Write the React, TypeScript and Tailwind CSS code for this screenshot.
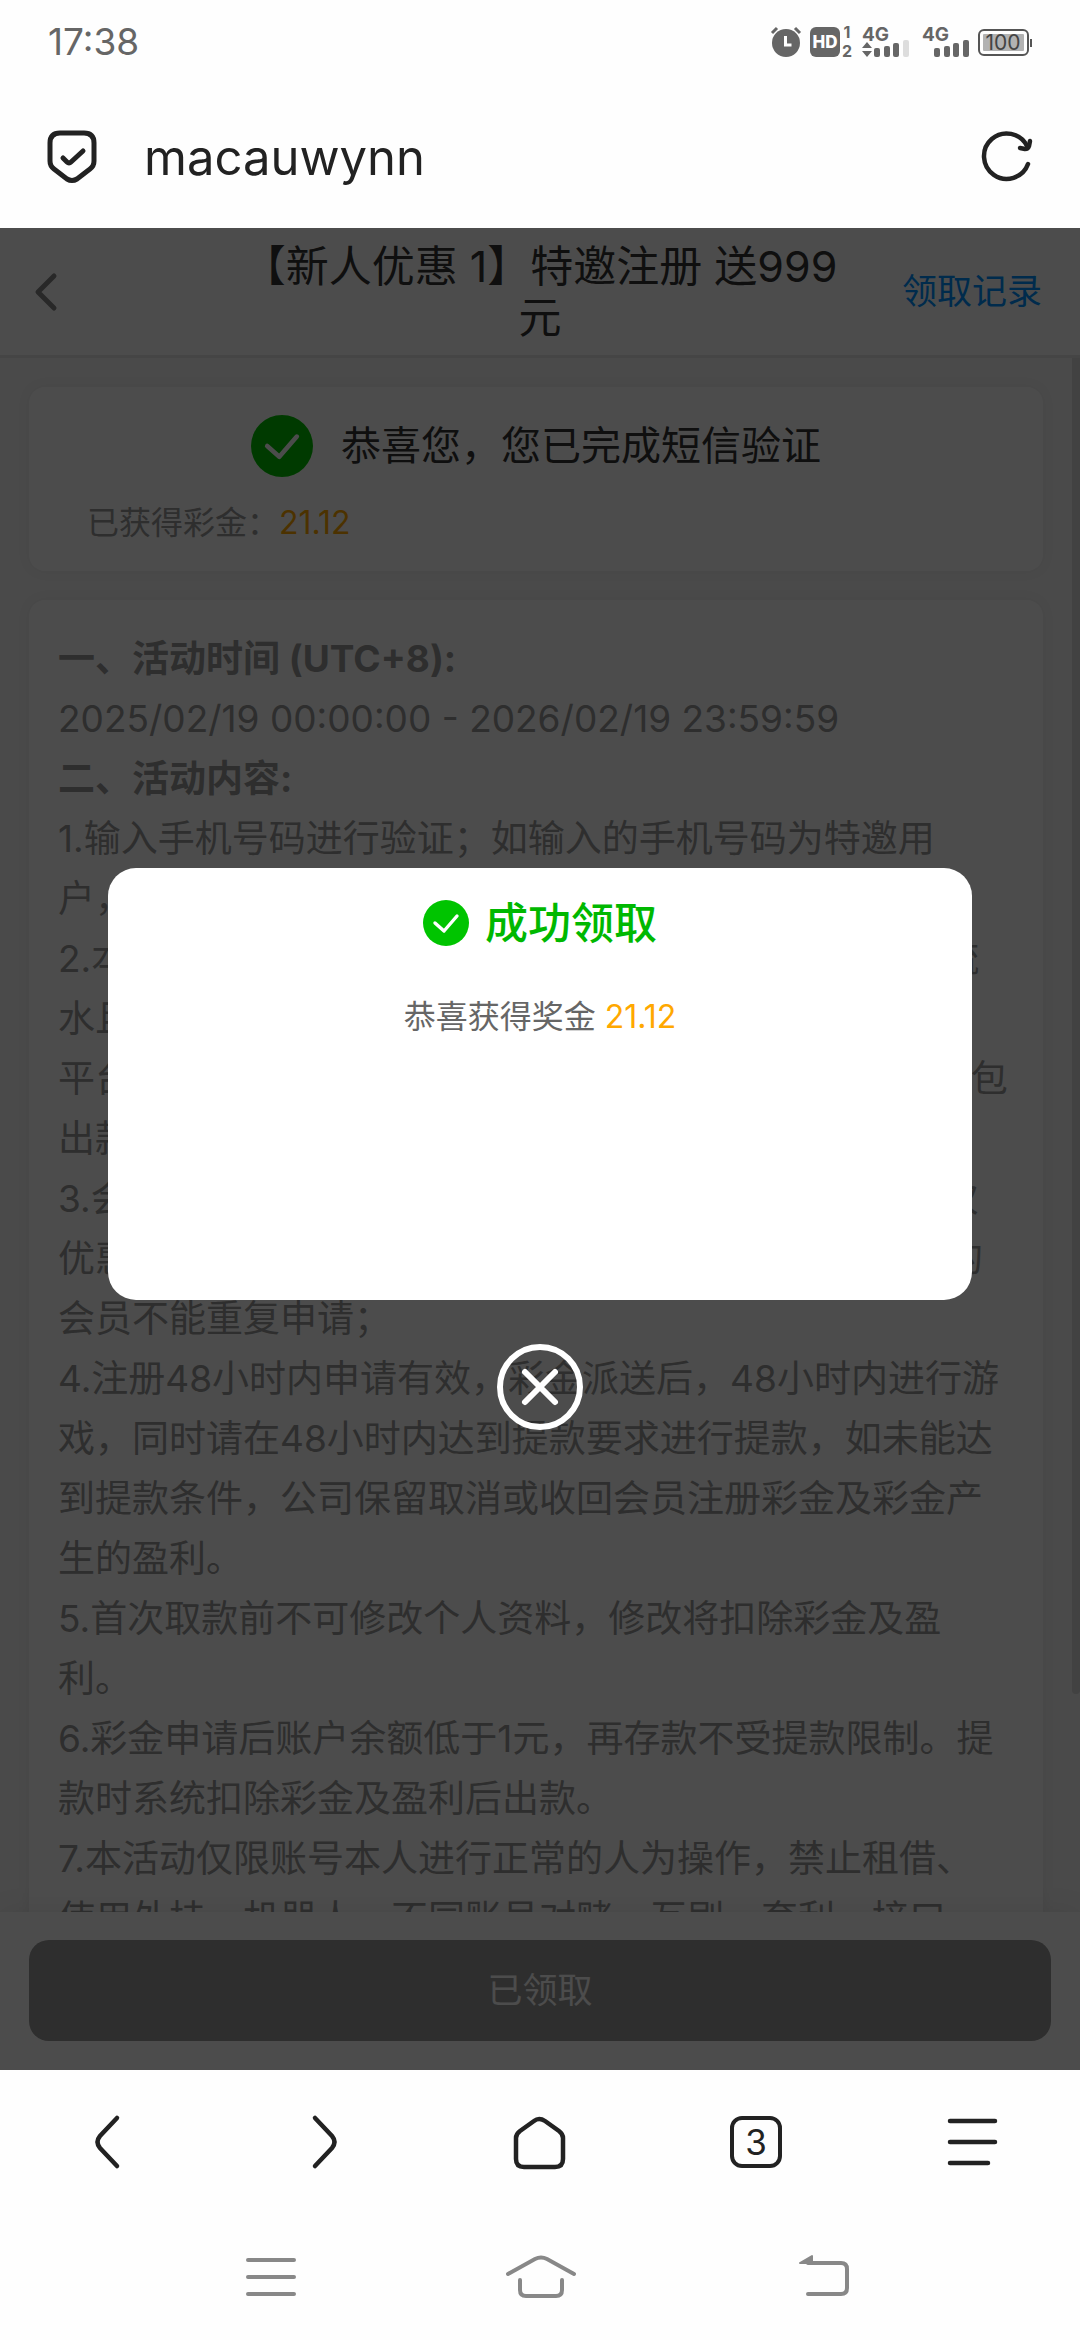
import React, { useState } from 'react';

const rules = [
  '1.输入手机号码进行验证；如输入的手机号码为特邀用\n户，即可完成短信验证并领取注册彩金；',
  '2.本活动赠送的彩金在任意游戏平台进行有效投注一倍流\n水且中心钱包余额达到100元以上即可申请提款，场馆或\n平台内的余额低于100元时请先将全部余额转回至中心钱包\n出款，每位会员仅限提款一次；',
  '3.会员每个手机号码每个账号每个银行卡仅可以享受一次\n优惠，同一姓名同一设备同一网络地址已经领取过彩金的\n会员不能重复申请；',
  '4.注册48小时内申请有效，彩金派送后，48小时内进行游\n戏，同时请在48小时内达到提款要求进行提款，如未能达\n到提款条件，公司保留取消或收回会员注册彩金及彩金产\n生的盈利。',
  '5.首次取款前不可修改个人资料，修改将扣除彩金及盈\n利。',
  '6.彩金申请后账户余额低于1元，再存款不受提款限制。提\n款时系统扣除彩金及盈利后出款。',
  '7.本活动仅限账号本人进行正常的人为操作，禁止租借、\n使用外挂、机器人、不同账号对赌、互刷、套利、接口',
];

function CheckCircle({ className }: { className: string }) {
  return (
    <svg viewBox="0 0 46 46" className={className} fill="none" aria-hidden="true">
      <circle cx="23" cy="23" r="23" fill="#00c400" />
      <path d="M12 23l9 8L34 16" stroke="#fff" strokeWidth="3.4" strokeLinecap="round" strokeLinejoin="round" />
    </svg>
  );
}

function Signal({ weak }: { weak?: boolean }) {
  return (
    <svg width="48" height="32" viewBox="0 0 48 32" fill="#666" className="overflow-visible" aria-hidden="true">
      <text x="0" y="15" fontSize="19" fontWeight="700">4G</text>
      {weak && <path d="M5 16l5 6H0zM5 31l5-6H0z" />}
      <rect x="12" y="22" width="6" height="9" rx="2" />
      <rect x="22" y="20" width="6" height="11" rx="2" />
      <rect x="31" y="17" width="6" height="14" rx="2" />
      <rect x="41" y="14" width="6" height="17" rx="2" fill={weak ? '#ddd' : '#666'} />
    </svg>
  );
}

function StatusBar() {
  return (
    <div className="flex h-[84px] shrink-0 items-center justify-between px-12 text-[#666]">
      <span className="text-[37px]">17:38</span>
      <div className="flex items-center">
        <svg width="32" height="32" viewBox="0 0 32 32" fill="none" aria-hidden="true">
          <circle cx="16" cy="17" r="14" fill="#666" />
          <path d="M2 7l5-5M30 7l-5-5" stroke="#666" strokeWidth="3" />
          <path d="M15.5 10v9h6" stroke="#fff" strokeWidth="3" />
        </svg>
        <svg width="44" height="32" viewBox="0 0 44 32" fill="#666" className="ml-2 overflow-visible" aria-hidden="true">
          <rect y="1" width="30" height="30" rx="6" />
          <text x="15" y="22" fontSize="17" fontWeight="800" textAnchor="middle" fill="#fff">HD</text>
          <text x="37" y="12" fontSize="16" fontWeight="700" textAnchor="middle">1</text>
          <text x="37" y="31" fontSize="16" fontWeight="700" textAnchor="middle">2</text>
        </svg>
        <div className="ml-2 flex gap-3">
          <Signal weak />
          <Signal />
        </div>
        <svg width="54" height="32" viewBox="0 0 54 32" fill="none" className="ml-2 overflow-visible" aria-hidden="true">
          <rect x="1" y="4" width="49" height="25" rx="5" stroke="#555" strokeWidth="2" />
          <rect x="5" y="8" width="41" height="17" rx="1" fill="#b2b2b2" />
          <path d="M53 13v8" stroke="#555" strokeWidth="2" />
          <text x="25" y="24" fontSize="21" textAnchor="middle" fill="#444">100</text>
        </svg>
      </div>
    </div>
  );
}

function AddressBar() {
  return (
    <div className="flex h-36 shrink-0 items-center pl-9 pr-[38px]">
      <svg width="72" height="72" viewBox="0 0 72 72" fill="none" stroke="#222" strokeWidth="5" strokeLinecap="round" strokeLinejoin="round" aria-hidden="true">
        <path d="M24 13h24q10 0 10 10v18q0 5-4 8L41 59q-5 3-10 0L18 49q-4-3-4-8V23q0-10 10-10z" />
        <path d="M27 38l4 4q2 2 4 0L47 31" />
      </svg>
      <input
        type="text"
        defaultValue="macauwynn"
        aria-label="地址"
        className="ml-9 min-w-0 flex-1 bg-transparent pt-1 text-[49px] text-[#222] outline-none"
      />
      <button aria-label="刷新">
        <svg width="72" height="72" viewBox="0 0 72 72" fill="none" stroke="#222" strokeWidth="4.5" strokeLinecap="round" strokeLinejoin="round">
          <path d="M58 44A22.7 22.7 0 1 1 57 26" />
          <path d="M50 28l5 1q3 0 4-3l1-5" />
        </svg>
      </button>
    </div>
  );
}

function BrowserNav() {
  const icon = 'mx-auto size-[72px]';
  return (
    <nav className="grid h-36 shrink-0 grid-cols-5 items-center text-[#222]">
      <button aria-label="后退">
        <svg viewBox="0 0 72 72" className={icon} fill="none" stroke="currentColor" strokeWidth="4.5" strokeLinecap="round">
          <path d="M45 12L28 30q-5 6 0 12l17 18" />
        </svg>
      </button>
      <button aria-label="前进">
        <svg viewBox="0 0 72 72" className={icon} fill="none" stroke="currentColor" strokeWidth="4.5" strokeLinecap="round">
          <path d="M27 12l17 18q5 6 0 12L27 60" />
        </svg>
      </button>
      <button aria-label="主页">
        <svg viewBox="0 0 72 72" className={icon} fill="none" stroke="currentColor" strokeWidth="4.5" strokeLinejoin="round">
          <path d="M12 32q0-4 4-7l14-10q5-4 11 0l14 10q4 3 4 7v21q0 8-8 8H20q-8 0-8-8z" />
        </svg>
      </button>
      <button aria-label="标签页">
        <span className="mx-auto flex size-[52px] items-center justify-center rounded-xl border-4 border-[#222] text-[35px] leading-none">3</span>
      </button>
      <button aria-label="菜单">
        <svg viewBox="0 0 72 72" className={icon} fill="none" stroke="currentColor" strokeWidth="4.5" strokeLinecap="round">
          <path d="M14 15h45M14 36h45M14 57h38" />
        </svg>
      </button>
    </nav>
  );
}

function SystemNav() {
  return (
    <nav className="mx-auto grid h-[126px] w-3/4 shrink-0 grid-cols-3 items-center text-[#888]">
      <button aria-label="最近任务">
        <svg viewBox="0 0 80 80" className="mx-auto size-20" fill="none" stroke="currentColor" strokeWidth="4" strokeLinecap="round">
          <path d="M18 23h46M18 40h46M18 57h46" />
        </svg>
      </button>
      <button aria-label="桌面">
        <svg viewBox="0 0 80 80" className="mx-auto size-20" fill="none" stroke="currentColor" strokeWidth="4" strokeLinecap="round">
          <path d="M8 37l27-15q6-3 12 0l27 15M20 43v10q0 6 6 6h30q6 0 6-6V43" />
        </svg>
      </button>
      <button aria-label="返回">
        <svg viewBox="0 0 80 80" className="mx-auto size-20" fill="none" stroke="currentColor" strokeWidth="4" strokeLinecap="round">
          <path d="M38 26h33q6 0 6 6v19q0 6-6 6H38" />
          <path d="M30 26l12-7v7z" fill="currentColor" strokeWidth="2" strokeLinejoin="round" />
        </svg>
      </button>
    </nav>
  );
}

export default function App() {
  const [open, setOpen] = useState(true);

  return (
    <div className="flex h-screen flex-col bg-[#fefefe] font-[Inter,'Noto_Sans_CJK_SC',sans-serif]">
      <StatusBar />
      <AddressBar />

      <div className="relative flex min-h-0 flex-1 flex-col overflow-hidden bg-[#f7f7f7]">
        <header className="grid h-[130px] shrink-0 grid-cols-[1fr_auto_1fr] items-center border-b-3 border-[#e6e6e6] bg-white">
          <button aria-label="返回" className="justify-self-start pl-7">
            <svg width="36" height="44" viewBox="0 0 36 44" fill="none" stroke="#888" strokeWidth="5" strokeLinecap="round" strokeLinejoin="round">
              <path d="M26 6L10 22l16 16" />
            </svg>
          </button>
          <h1 className="text-center text-[43px] leading-[51px] text-[#333]">
            【新人优惠 1】特邀注册 送999
            <br />元
          </h1>
          <a href="#records" className="justify-self-end pr-[38px] text-[35px] text-[#0091ff]">领取记录</a>
        </header>

        <div className="flex min-h-0 flex-1">
          <main className="flex min-w-0 flex-1 flex-col gap-[29px] overflow-hidden px-[29px] pt-[29px]">
            <section className="shrink-0 rounded-2xl bg-white pt-7 pb-6 shadow-[0_0_14px_rgba(0,0,0,0.06)]">
              <div className="flex items-center justify-center gap-7">
                <CheckCircle className="size-[62px]" />
                <h2 className="text-[40px] leading-[60px] text-[#333]">恭喜您，您已完成短信验证</h2>
              </div>
              <p className="mt-[22px] px-[58px] text-[32px] leading-[48px] text-[#999]">
                已获得彩金：<span className="text-[#ffa800]">21.12</span>
              </p>
            </section>

            <section className="shrink-0 rounded-2xl bg-white p-[29px] text-[37px] leading-[60px] text-[#999] shadow-[0_0_14px_rgba(0,0,0,0.06)]">
              <h3 className="font-bold">一、活动时间 (UTC+8):</h3>
              <p>2025/02/19 00:00:00 - 2026/02/19 23:59:59</p>
              <h3 className="font-bold">二、活动内容:</h3>
              {rules.map((rule) => (
                <p key={rule} className="whitespace-pre">{rule}</p>
              ))}
            </section>
          </main>
          <div className="w-2 shrink-0">
            <div className="h-[86%] rounded-b-sm bg-[#dcdcdc]" />
          </div>
        </div>

        <footer className="shrink-0 bg-white px-[29px] pt-7 pb-[29px] shadow-[0_0_28px_rgba(0,0,0,0.08)]">
          <button disabled className="h-[101px] w-full rounded-[20px] bg-[#999] text-[35px] text-white">已领取</button>
        </footer>

        {open && (
          <div className="absolute inset-0 flex flex-col items-center justify-center bg-black/70">
            <div role="dialog" aria-label="成功领取" className="aspect-[2/1] w-4/5 rounded-[28px] bg-white pt-[29px] text-center">
              <div className="flex items-center justify-center gap-4">
                <CheckCircle className="size-[46px]" />
                <h2 className="text-[43px] leading-[52px] font-medium text-[#00b800]">成功领取</h2>
              </div>
              <p className="mt-11 text-[32px] leading-[48px] text-[#666]">
                恭喜获得奖金 <span className="text-[#ffa800]">21.12</span>
              </p>
            </div>
            <button aria-label="关闭" onClick={() => setOpen(false)} className="mt-11">
              <svg width="86" height="86" viewBox="0 0 86 86" fill="none" stroke="#fff" strokeWidth="6" strokeLinecap="round">
                <circle cx="43" cy="43" r="40" />
                <path d="M28 28l30 30M58 28L28 58" />
              </svg>
            </button>
          </div>
        )}
      </div>

      <BrowserNav />
      <SystemNav />
    </div>
  );
}
